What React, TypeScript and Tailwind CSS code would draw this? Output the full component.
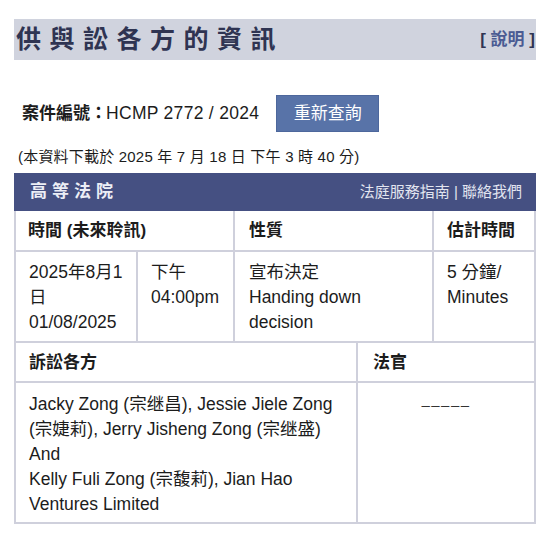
import React from "react";

const font = { fontFamily: '"Liberation Sans", "Noto Sans CJK TC", sans-serif' };

export default function App() {
  return (
    <div
      className="w-[550px] h-[537px] bg-white px-[14px] pt-[19px] text-[#1c1c1c]"
      style={font}
    >
      {/* Title bar */}
      <div className="h-[41px] bg-[#d0d3de] flex items-center justify-between pl-[2px] pr-[1px]">
        <div className="text-[25px] font-bold tracking-[8.5px] text-[#2f3452] leading-none">
          供與訟各方的資訊
        </div>
        <div className="text-[17px] text-[#2f3452] font-bold leading-none">
          [ <span className="text-[#4a5b93]">說明</span> ]
        </div>
      </div>

      {/* Case row */}
      <div className="mt-[35px] flex items-center h-[37px] pl-[8px]">
        <span className="text-[17px] font-bold">案件編號：</span>
        <span className="text-[17.5px] -ml-[1px] tracking-[0.3px]">HCMP 2772 / 2024</span>
        <button className="ml-[17px] w-[103px] h-[37px] bg-[#5873a8] text-white text-[17px] border border-[#4d679c]">
          重新查詢
        </button>
      </div>

      {/* Download line */}
      <div className="mt-[15px] pl-[4px] text-[15px] leading-[20px] tracking-[0.2px]">
        (本資料下載於 2025 年 7 月 18 日 下午 3 時 40 分)
      </div>

      {/* Court header bar */}
      <div className="mt-[6px] h-[38px] bg-[#455082] flex items-center justify-between pl-[16px] pr-[14px]">
        <div className="text-[17px] font-bold tracking-[5px] text-[#eceef6]">高等法院</div>
        <div className="text-[15px] text-[#e2e5f0]">法庭服務指南 | 聯絡我們</div>
      </div>

      {/* Table top */}
      <div className="border-x-2 border-[#cfd0dc]">
        <div className="grid grid-cols-[122px_97px_199px_100px] text-[17.5px] leading-[25px]">
          <div className="col-span-2 border-r-2 border-b-2 border-[#cfd0dc] h-[41px] flex items-center pl-[12px] font-bold text-[17px]">
            時間 (未來聆訊)
          </div>
          <div className="border-r-2 border-b-2 border-[#cfd0dc] h-[41px] flex items-center pl-[14px] font-bold text-[17px]">
            性質
          </div>
          <div className="border-b-2 border-[#cfd0dc] h-[41px] flex items-center pl-[13px] font-bold text-[17px]">
            估計時間
          </div>

          <div className="border-r-2 border-b-2 border-[#cfd0dc] h-[91px] pl-[13px] pr-[2px] pt-[8px] whitespace-nowrap">
            2025年8月1
            <br />日
            <br />
            01/08/2025
          </div>
          <div className="border-r-2 border-b-2 border-[#cfd0dc] h-[91px] pl-[13px] pt-[8px] whitespace-nowrap">
            下午
            <br />
            04:00pm
          </div>
          <div className="border-r-2 border-b-2 border-[#cfd0dc] h-[91px] pl-[14px] pr-[6px] pt-[8px] whitespace-nowrap">
            宣布決定
            <br />
            Handing down
            <br />
            decision
          </div>
          <div className="border-b-2 border-[#cfd0dc] h-[91px] pl-[13px] pt-[8px] whitespace-nowrap">
            5 分鐘/
            <br />
            Minutes
          </div>
        </div>

        {/* Table bottom */}
        <div className="grid grid-cols-[342px_176px] text-[17.5px] leading-[25px]">
          <div className="border-r-2 border-b-2 border-[#cfd0dc] h-[40px] flex items-center pl-[13px] font-bold text-[17px]">
            訴訟各方
          </div>
          <div className="border-b-2 border-[#cfd0dc] h-[40px] flex items-center pl-[15px] font-bold text-[17px]">
            法官
          </div>
          <div className="border-r-2 border-b-2 border-[#cfd0dc] h-[141px] pl-[13px] pt-[9px] whitespace-nowrap">
            Jacky Zong (宗继昌), Jessie Jiele Zong
            <br />
            (宗婕莉), Jerry Jisheng Zong (宗继盛)
            <br />
            And
            <br />
            Kelly Fuli Zong (宗馥莉), Jian Hao
            <br />
            Ventures Limited
          </div>
          <div className="border-b-2 border-[#cfd0dc] h-[141px] pt-[9px] text-center text-[#333] text-[15px] tracking-[1.5px]">
            –––––
          </div>
        </div>
      </div>
    </div>
  );
}
